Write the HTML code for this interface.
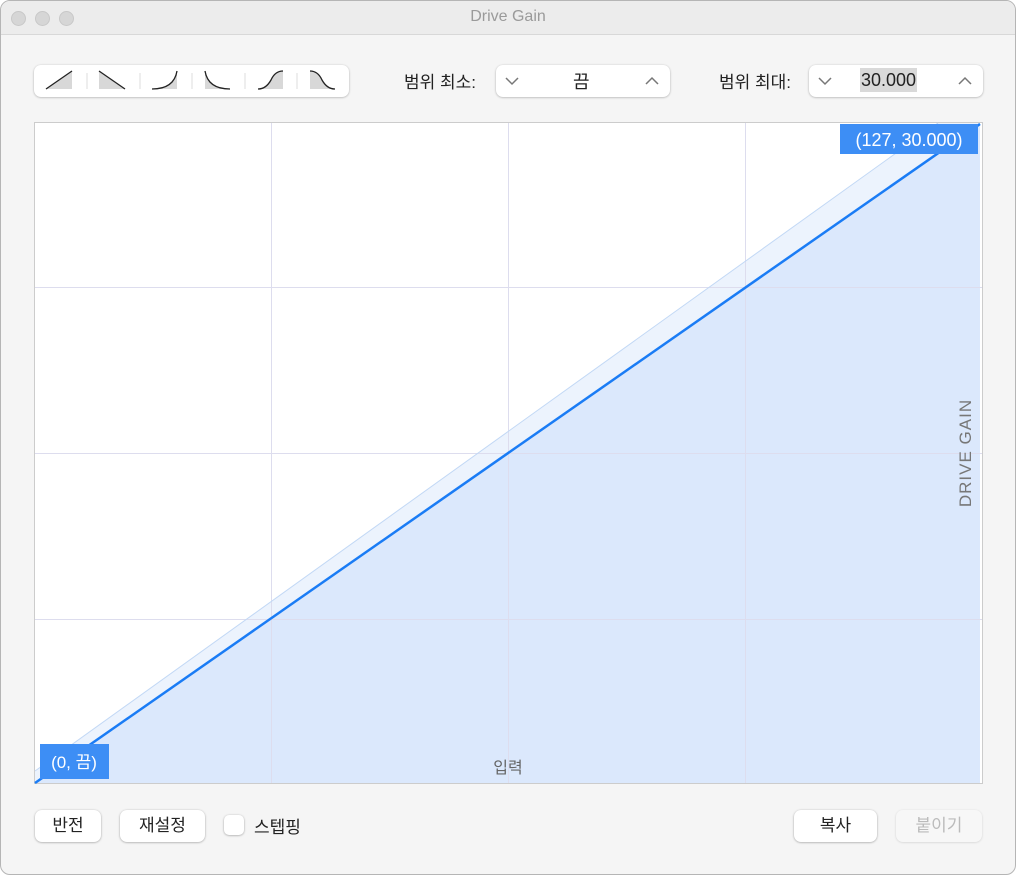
<!DOCTYPE html>
<html><head><meta charset="utf-8"><style>
body{margin:0;width:1016px;height:875px;background:#fff;font-family:"Liberation Sans","Noto Sans CJK KR",sans-serif;overflow:hidden}
.win{position:absolute;left:0;top:0;width:1014px;height:873px;border:1px solid #b5b5b5;border-radius:10px;background:#f5f5f5;overflow:hidden}
.tb{height:33px;background:#ececec;border-bottom:1px solid #d8d8d8;position:relative}
.dot{position:absolute;top:10px;width:13px;height:13px;border-radius:50%;background:#d6d6d6;border:0.5px solid #c8c8c8}
.title{position:absolute;left:0;right:0;top:7px;text-align:center;font-size:16px;color:#9a9a9a}
.seg{position:absolute;left:33px;top:64px;width:315px;height:32px;background:#fff;border-radius:7px;box-shadow:0 0.5px 2px rgba(0,0,0,.3)}
.lbl{position:absolute;font-size:17px;color:#222}
.stp{position:absolute;top:64px;height:32px;background:#fff;border-radius:7px;box-shadow:0 0.5px 2px rgba(0,0,0,.3);font-size:18px;color:#222}
.stp svg{position:absolute;top:11px}
.btn{position:absolute;top:809px;height:32px;background:#fff;border-radius:7px;box-shadow:0 0.5px 2px rgba(0,0,0,.35);font-size:17px;color:#222;text-align:center;line-height:32px}
</style></head><body><div class="win">
<div class="tb"><div class="dot" style="left:10px"></div><div class="dot" style="left:34px"></div><div class="dot" style="left:58px"></div><div class="title">Drive Gain</div></div>
<div class="seg"><svg width="315" height="32">
<g stroke="#ddd" stroke-width="1"><line x1="53" y1="8" x2="53" y2="24"/><line x1="106" y1="8" x2="106" y2="24"/><line x1="158" y1="8" x2="158" y2="24"/><line x1="211" y1="8" x2="211" y2="24"/><line x1="263" y1="8" x2="263" y2="24"/></g>
<g fill="#d8d8d8"><path d="M12 24 L38 6 L38 24Z"/><path d="M65 6 L91 24 L65 24Z"/><path d="M118 24 Q140 24 143 6 L143 24Z"/><path d="M171 6 Q174 24 196 24 L171 24Z"/><path d="M224 24 Q232 24 237 15 Q241 6 249 6 L249 24Z"/><path d="M276 6 Q284 6 288 15 Q293 24 301 24 L276 24Z"/></g>
<g fill="none" stroke="#222" stroke-width="1.3"><path d="M12 24 L38 6"/><path d="M65 6 L91 24"/><path d="M118 24 Q140 24 143 6"/><path d="M171 6 Q174 24 196 24"/><path d="M224 24 Q232 24 237 15 Q241 6 249 6"/><path d="M276 6 Q284 6 288 15 Q293 24 301 24"/></g></svg></div>
<div class="lbl" style="left:403px;top:67px">범위 최소:</div>
<div class="stp" style="left:495px;width:174px"><svg style="left:8px" width="16" height="10"><path d="M2 2 L8 8 L14 2" fill="none" stroke="#777" stroke-width="1.5"/></svg><span style="position:absolute;left:77px;top:3px">끔</span><svg style="left:148px" width="16" height="10"><path d="M2 8 L8 2 L14 8" fill="none" stroke="#777" stroke-width="1.5"/></svg></div>
<div class="lbl" style="left:718px;top:67px">범위 최대:</div>
<div class="stp" style="left:808px;width:174px"><svg style="left:8px" width="16" height="10"><path d="M2 2 L8 8 L14 2" fill="none" stroke="#777" stroke-width="1.5"/></svg><span style="position:absolute;left:51px;top:3px;background:#d9d9d9;padding:1px 1px;line-height:22px">30.000</span><svg style="left:148px" width="16" height="10"><path d="M2 8 L8 2 L14 8" fill="none" stroke="#777" stroke-width="1.5"/></svg></div>
<svg style="position:absolute;left:33px;top:121px" width="950" height="663">
<rect x="0.5" y="0.5" width="948" height="661" fill="#fff" stroke="#ccc"/>
<path d="M1 649 L904 1 L946 1 L946 661 L1 661Z" fill="#ecf3fd"/>
<path d="M1 661 L946 2 L946 661Z" fill="#dbe8fc"/>
<g stroke="#dde" stroke-width="1"><line x1="237.5" y1="1" x2="237.5" y2="661"/><line x1="474.5" y1="1" x2="474.5" y2="661"/><line x1="711.5" y1="1" x2="711.5" y2="661"/><line x1="1" y1="165.5" x2="948" y2="165.5"/><line x1="1" y1="331.5" x2="948" y2="331.5"/><line x1="1" y1="497.5" x2="948" y2="497.5"/></g>
<path d="M1 649 L904 1" stroke="#c2d8f5" stroke-width="1" fill="none"/>
<line x1="1" y1="661" x2="946" y2="2" stroke="#1a7cf5" stroke-width="2.5"/>
<rect x="806" y="2" width="138" height="30" fill="#3d8ef5"/>
<text x="875" y="24" fill="#fff" font-size="18" text-anchor="middle" font-family="Liberation Sans">(127, 30.000)</text>
<rect x="6" y="622" width="69" height="35" fill="#3d8ef5"/>
<text x="40" y="646" fill="#fff" font-size="17" text-anchor="middle" font-family="Liberation Sans,Noto Sans CJK KR">(0, 끔)</text>
<text x="474" y="651" fill="#666" font-size="16" text-anchor="middle" font-family="Liberation Sans,Noto Sans CJK KR">입력</text>
<text transform="translate(937 331) rotate(-90)" fill="#777" font-size="17" text-anchor="middle" font-family="Liberation Sans" letter-spacing="1">DRIVE GAIN</text>
</svg>
<div class="btn" style="left:34px;width:66px">반전</div>
<div class="btn" style="left:119px;width:85px">재설정</div>
<div style="position:absolute;left:223px;top:814px;width:20px;height:20px;background:#fff;border-radius:5px;box-shadow:0 0.5px 2px rgba(0,0,0,.35)"></div>
<div class="lbl" style="left:253px;top:812px">스텝핑</div>
<div class="btn" style="left:793px;width:83px">복사</div>
<div class="btn" style="left:895px;width:86px;color:#bbb;background:#f7f7f7;box-shadow:0 0.5px 2px rgba(0,0,0,.15)">붙이기</div>
</div></body></html>
